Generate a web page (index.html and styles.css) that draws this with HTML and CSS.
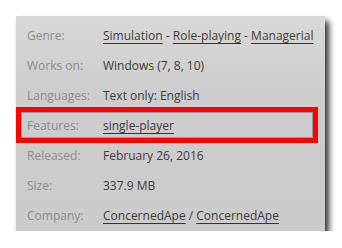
FILE: index.html
```html
<!DOCTYPE html>
<html>
<head>
<meta charset="utf-8">
<title>Game details</title>
<link rel="stylesheet" href="styles.css">
</head>
<body>
<div class="details">
  <div class="row">
    <div class="label">Genre:</div>
    <div class="value"><a href="#">Simulation</a> - <a href="#">Role-playing</a> - <a href="#">Managerial</a></div>
  </div>
  <div class="row">
    <div class="label">Works on:</div>
    <div class="value">Windows (7, 8, 10)</div>
  </div>
  <div class="row">
    <div class="label">Languages:</div>
    <div class="value">Text only: English</div>
  </div>
  <div class="row marked">
    <div class="label">Features:</div>
    <div class="value"><a href="#">single-player</a></div>
  </div>
  <div class="row">
    <div class="label">Released:</div>
    <div class="value">February 26, 2016</div>
  </div>
  <div class="row">
    <div class="label">Size:</div>
    <div class="value">337.9 MB</div>
  </div>
  <div class="row">
    <div class="label">Company:</div>
    <div class="value"><a href="#">ConcernedApe</a> / <a href="#">ConcernedApe</a></div>
  </div>
</div>
</body>
</html>
```
FILE: styles.css
```css
body {
  margin: 0;
  background-color: white;
  font-family: "Open Sans", "DejaVu Sans", sans-serif;
}

.details {
  margin: 16px 0 0 16px;
  width: 309px;
  height: 215px;
  padding-top: 4px;
  box-sizing: border-box;
  background: linear-gradient(#d8d8d6, #cdcdcd 35%, #cbcbcb);
  box-shadow: 4px 5px 6px rgba(0, 0, 0, 0.8);
}

.row {
  position: relative;
  display: flex;
  align-items: center;
  height: 30px;
  padding-left: 11px;
  font-size: 12px;
}

.label {
  width: 76px;
  color: #8c8c8c;
}

.value {
  color: #3c3c3c;
}

.value a {
  color: #3c3c3c;
  text-decoration: underline;
  text-decoration-color: #333;
  text-underline-offset: 3px;
}

/* highlight frame around the features row */
.marked::after {
  content: "";
  position: absolute;
  left: 0;
  right: 7px;
  top: -3px;
  bottom: -3px;
  border: 5px solid #ff0000;
  box-shadow: inset 0 0 0 1px #9a9a9a;
}
```
